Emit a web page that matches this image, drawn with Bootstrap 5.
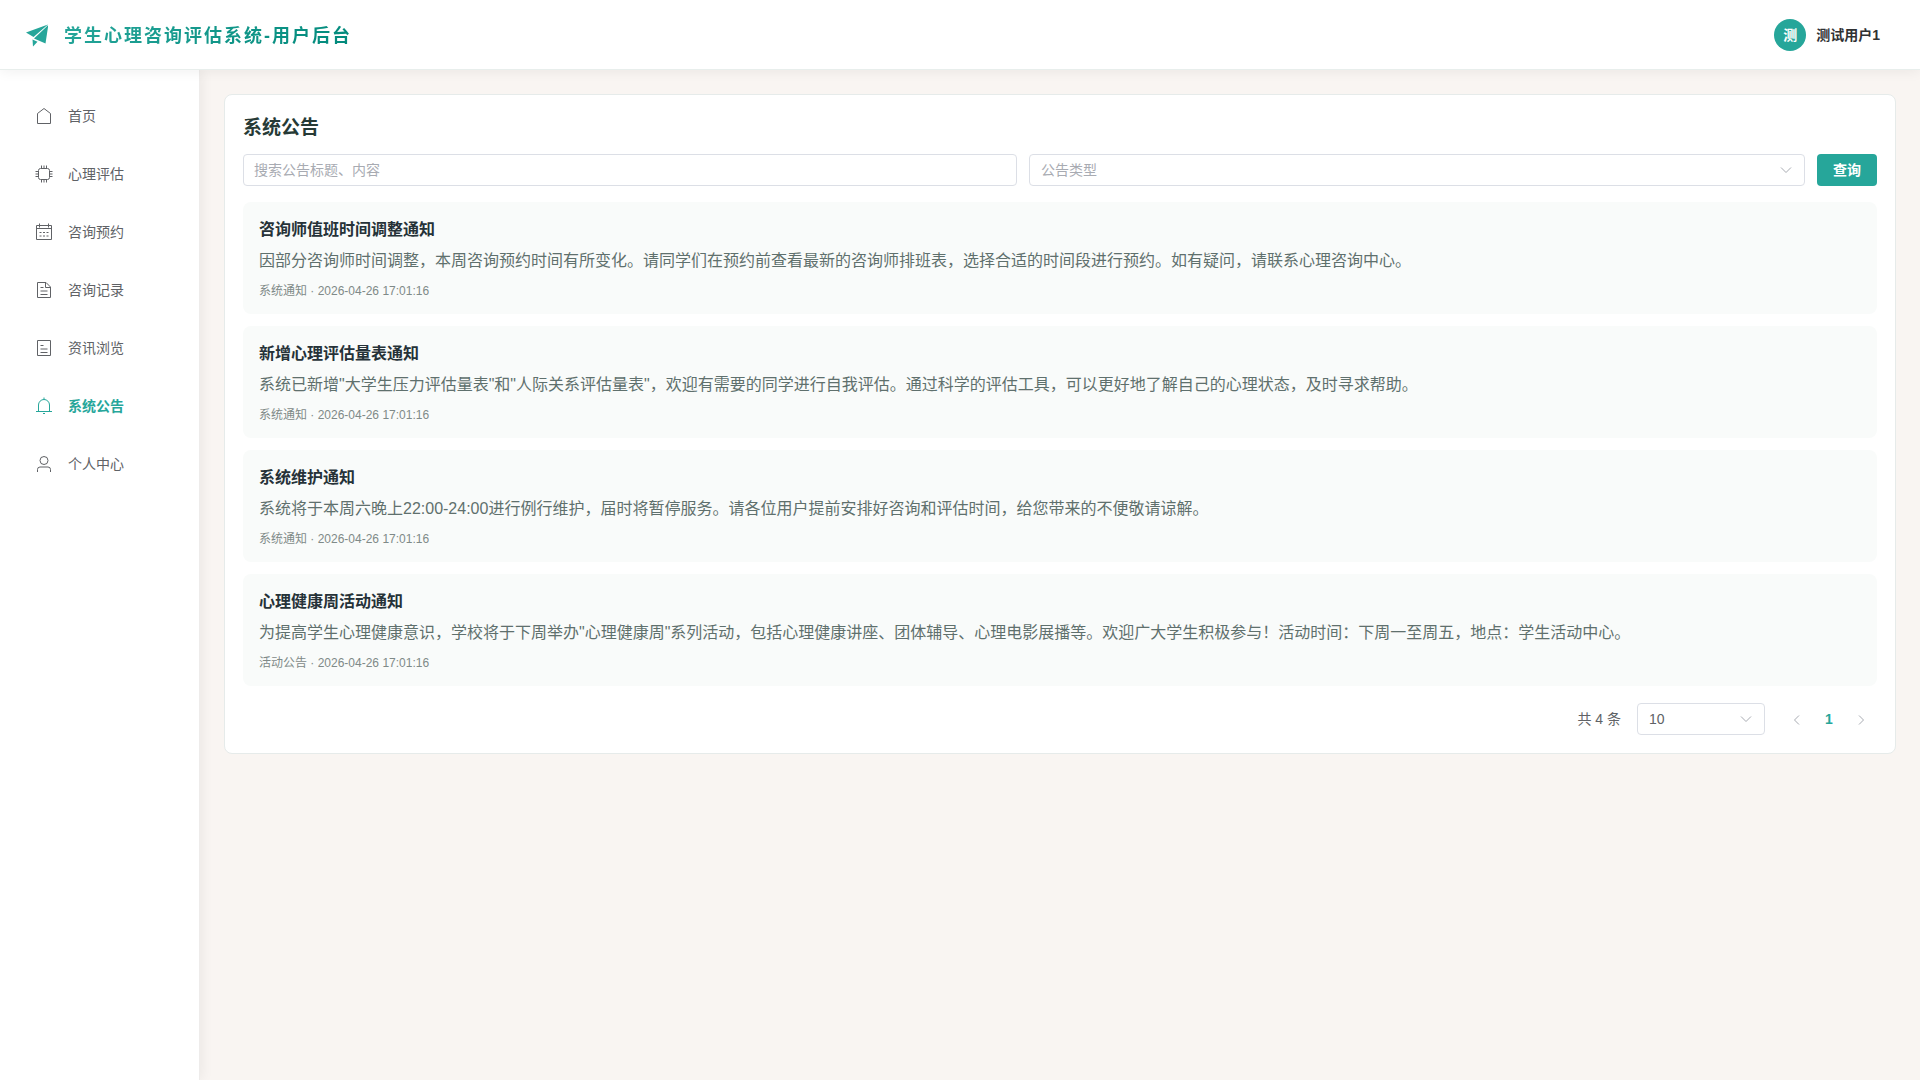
<!DOCTYPE html>
<html lang="zh-CN">
<head>
<meta charset="utf-8">
<meta name="viewport" content="width=device-width, initial-scale=1">
<title>学生心理咨询评估系统-用户后台</title>
<link rel="stylesheet" href="https://cdn.jsdelivr.net/npm/bootstrap@5.3.0/dist/css/bootstrap.min.css">
<style>
  :root { --teal: #26a69a; --line: #dcdfe6; --muted: #a8abb2; }
  body { font-family: "Liberation Sans", "Noto Sans CJK SC", sans-serif; font-size: 14px; line-height: 20px; color: #606266; background: #f9f5f2; }
  .topbar { height: 70px; padding: 0 40px 0 24px; border-bottom: 1px solid #e8eeec; box-shadow: 0 2px 12px rgba(0,0,0,.06); z-index: 3; }
  .brand-text { font-size: 18px; line-height: 28px; padding-top: 2px; font-weight: 700; letter-spacing: 2px; color: var(--teal); background: linear-gradient(135deg, #26a69a, #00897b); -webkit-background-clip: text; background-clip: text; -webkit-text-fill-color: transparent; }
  .user-box { gap: 10px; }
  .avatar-dot { width: 32px; height: 32px; background: var(--teal); font-weight: 700; }
  .user-name { color: #303133; font-weight: 700; }
  .sidebar { width: 200px; padding: 21px 8px; box-shadow: 2px 0 12px rgba(0,0,0,.06); border-right: 1px solid #eeeceb; z-index: 2; }
  .side-link { height: 50px; padding: 0 27px; gap: 15px; color: #606266; }
  .side-link svg { width: 18px; height: 18px; }
  .side-link.active { color: var(--teal); font-weight: 700; }
  .main-area { padding: 24px; }
  .panel { border: 1px solid #e6ebea; border-radius: 8px; padding: 18px; }
  .panel-title { font-size: 19px; line-height: 28px; padding-top: 1px; font-weight: 700; color: #263a36; margin-bottom: 12px; }
  .filters, .notice-list { gap: 12px; }
  .notice-list { margin-bottom: 17px; }
  .field { height: 32px; min-height: 32px; border: 1px solid var(--line); border-radius: 4px; font-size: 14px; line-height: 20px; padding: 0 10px; color: #606266; }
  .filters .field { flex: 1 1 0; }
  select.field { padding: 0 11px; }
  .field::placeholder { color: var(--muted); }
  select.field { background-image: url("data:image/svg+xml,%3Csvg xmlns='http://www.w3.org/2000/svg' viewBox='0 0 14 14'%3E%3Cpath d='M2 4.5l5 5 5-5' fill='none' stroke='%23a8abb2'/%3E%3C/svg%3E"); background-size: 14px 14px; background-position: right 11px center; }
  select.type-select { color: var(--muted); }
  .size-select { width: 128px; }
  .btn-query { width: 60px; height: 32px; padding: 0; border: 0; border-radius: 4px; font-size: 14px; font-weight: 700; background: var(--teal); color: #fff; }
  .notice { background: #f9fbfa; border-radius: 8px; padding: 17px 16px 15px; }
  .notice-title { font-size: 16px; line-height: 22px; font-weight: 700; color: #263238; margin-bottom: 8px; }
  .notice-body { font-size: 16px; line-height: 24px; color: #5f706d; margin-bottom: 10px; }
  .notice-meta { font-size: 12px; line-height: 16px; color: #7f8a88; }
  .pager-btn { width: 32px; height: 32px; padding: 0; border: 0; background: none; color: #a8abb2; }
  .pager-btn.current { color: var(--teal); font-weight: 700; }
</style>
<script src="https://cdn.jsdelivr.net/npm/bootstrap@5.3.0/dist/js/bootstrap.bundle.min.js"></script>
</head>
<body class="d-flex flex-column min-vh-100">
<header class="topbar bg-white d-flex align-items-center justify-content-between position-relative">
  <a href="#" class="d-flex align-items-center text-decoration-none">
    <svg class="me-3" width="24" height="24" viewBox="0 0 24 24" fill="#26a69a" aria-hidden="true"><path d="M2 9.500 24 1.500 9.500 14z"/><path d="M24.300 2 21.500 20.500 10 15.500z"/><path d="M8.500 16.500l5 2.300L9 23.500z"/></svg>
    <span class="brand-text">学生心理咨询评估系统-用户后台</span>
  </a>
  <div class="user-box d-flex align-items-center">
    <span class="avatar-dot rounded-circle text-white d-flex align-items-center justify-content-center">测</span>
    <span class="user-name">测试用户1</span>
  </div>
</header>
<div class="d-flex flex-grow-1">
  <nav class="sidebar bg-white flex-shrink-0 position-relative d-flex flex-column gap-2" aria-label="主菜单">
    <a href="#" class="side-link d-flex align-items-center text-decoration-none"><svg viewBox="0 0 18 18" fill="none" stroke="currentColor" aria-hidden="true"><path d="M2.500 16.500V6.500L9 1.500 15.500 6.500v10z"/></svg>首页</a>
    <a href="#" class="side-link d-flex align-items-center text-decoration-none"><svg viewBox="0 0 18 18" fill="none" stroke="currentColor" aria-hidden="true"><rect x="3.500" y="3.500" width="11" height="11" rx="2"/><path d="M6.500 .5v3M9 .5v3M11.500 .5v3M6.500 14.500v3M9 14.500v3M11.500 14.500v3M.5 6.500h3M.5 9h3M.5 11.500h3M14.500 6.500h3M14.500 9h3M14.500 11.500h3"/></svg>心理评估</a>
    <a href="#" class="side-link d-flex align-items-center text-decoration-none"><svg viewBox="0 0 18 18" fill="none" stroke="currentColor" aria-hidden="true"><path d="M1.500 2.500h15v14h-15zM1.500 5.500h15M4.500 .5v4M13.500 .5v4M4.500 9.500h2M8 9.500h2M11.500 9.500h2M4.500 13h2M8 13h2M11.500 13h2"/></svg>咨询预约</a>
    <a href="#" class="side-link d-flex align-items-center text-decoration-none"><svg viewBox="0 0 18 18" fill="none" stroke="currentColor" aria-hidden="true"><path d="M2.500 1.500h8.500l4.500 4.500v10.500h-13zM10.500 1.500V6.500h5M5.500 6.500h3M5.500 10h7M5.500 13.500h7"/></svg>咨询记录</a>
    <a href="#" class="side-link d-flex align-items-center text-decoration-none"><svg viewBox="0 0 18 18" fill="none" stroke="currentColor" aria-hidden="true"><path d="M2.500 1.500h13v15h-13zM5.500 6.500h3M5.500 10h7M5.500 13.500h7"/></svg>资讯浏览</a>
    <a href="#" class="side-link active d-flex align-items-center text-decoration-none" aria-current="page"><svg viewBox="0 0 18 18" fill="none" stroke="currentColor" aria-hidden="true"><path d="M1 14.500h16M3.500 14.500V8a5.500 5.500 0 0 1 11 0v6.500M9 .5v2M8 16.500h2"/></svg>系统公告</a>
    <a href="#" class="side-link d-flex align-items-center text-decoration-none"><svg viewBox="0 0 18 18" fill="none" stroke="currentColor" aria-hidden="true"><circle cx="9" cy="5.500" r="4"/><path d="M2.500 17v-2.500a2.500 2.500 0 0 1 2.500-2.500h8a2.500 2.500 0 0 1 2.500 2.500V17"/></svg>个人中心</a>
  </nav>
  <main class="main-area flex-grow-1">
    <section class="panel bg-white">
      <h1 class="panel-title">系统公告</h1>
      <form class="filters d-flex mb-3">
        <input type="text" class="field form-control" placeholder="搜索公告标题、内容" aria-label="搜索公告标题、内容">
        <select class="field form-select type-select" aria-label="公告类型"><option>公告类型</option></select>
        <button type="button" class="btn btn-query flex-shrink-0">查询</button>
      </form>
      <div class="notice-list d-flex flex-column">
        <article class="notice">
          <h2 class="notice-title">咨询师值班时间调整通知</h2>
          <p class="notice-body">因部分咨询师时间调整，本周咨询预约时间有所变化。请同学们在预约前查看最新的咨询师排班表，选择合适的时间段进行预约。如有疑问，请联系心理咨询中心。</p>
          <div class="notice-meta">系统通知 · 2026-04-26 17:01:16</div>
        </article>
        <article class="notice">
          <h2 class="notice-title">新增心理评估量表通知</h2>
          <p class="notice-body">系统已新增"大学生压力评估量表"和"人际关系评估量表"，欢迎有需要的同学进行自我评估。通过科学的评估工具，可以更好地了解自己的心理状态，及时寻求帮助。</p>
          <div class="notice-meta">系统通知 · 2026-04-26 17:01:16</div>
        </article>
        <article class="notice">
          <h2 class="notice-title">系统维护通知</h2>
          <p class="notice-body">系统将于本周六晚上22:00-24:00进行例行维护，届时将暂停服务。请各位用户提前安排好咨询和评估时间，给您带来的不便敬请谅解。</p>
          <div class="notice-meta">系统通知 · 2026-04-26 17:01:16</div>
        </article>
        <article class="notice">
          <h2 class="notice-title">心理健康周活动通知</h2>
          <p class="notice-body">为提高学生心理健康意识，学校将于下周举办"心理健康周"系列活动，包括心理健康讲座、团体辅导、心理电影展播等。欢迎广大学生积极参与！活动时间：下周一至周五，地点：学生活动中心。</p>
          <div class="notice-meta">活动公告 · 2026-04-26 17:01:16</div>
        </article>
      </div>
      <div class="d-flex align-items-center justify-content-end">
        <span class="me-3">共 4 条</span>
        <select class="field form-select size-select me-3" aria-label="每页条数"><option>10</option></select>
        <button type="button" class="pager-btn" aria-label="上一页"><svg width="12" height="12" viewBox="0 0 12 12" fill="none" stroke="currentColor"><path d="M8 1.500 3.500 6 8 10.500"/></svg></button>
        <button type="button" class="pager-btn current">1</button>
        <button type="button" class="pager-btn" aria-label="下一页"><svg width="12" height="12" viewBox="0 0 12 12" fill="none" stroke="currentColor"><path d="M4 1.500 8.500 6 4 10.500"/></svg></button>
      </div>
    </section>
  </main>
</div>
</body>
</html>
